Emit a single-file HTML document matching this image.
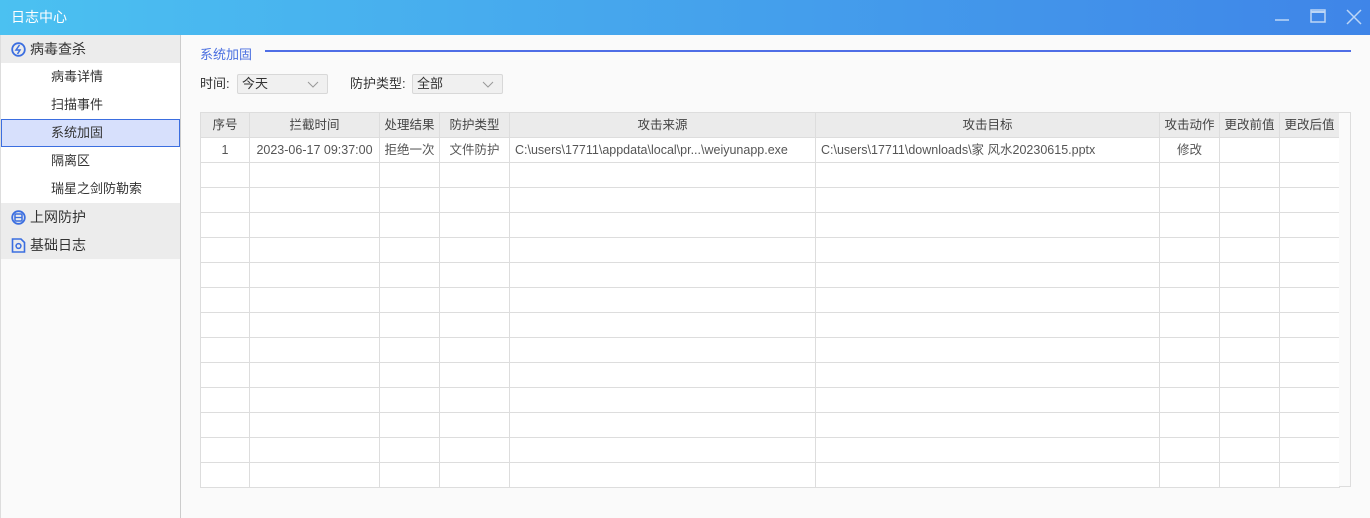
<!DOCTYPE html>
<html><head><meta charset="utf-8"><style>
*{margin:0;padding:0;box-sizing:border-box}
body{width:1370px;height:518px;overflow:hidden;background:#fafafa;font-family:"Liberation Sans","Noto Sans CJK SC",sans-serif;font-size:13px;color:#333;position:relative}
.title{position:absolute;left:0;top:0;width:1370px;height:35px;background:linear-gradient(90deg,#4bc1f1,#3f85e8);color:#fff;font-size:14px;line-height:35px;padding-left:11px}
.side{position:absolute;left:0;top:35px;width:181px;height:483px;background:#fafafa;border-right:1px solid #ccc;border-left:1px solid #ddd}
.grp{height:28px;background:#ececec;line-height:28px;font-size:14px;padding-left:29px;position:relative;color:#333}
.grp svg{position:absolute;left:10px;top:7px}
.it{height:28px;line-height:28px;padding-left:50px;background:#fff}
.sel{background:#d7e0fc;border:1px solid #3b6ee0;line-height:26px;padding-left:49px}
.sec{position:absolute;left:200px;top:44px;color:#4a6fe0;font-size:13px}
.secline{position:absolute;left:265px;top:50px;width:1086px;height:2px;background:#4f6ee6}
.lbl{position:absolute;top:74px;font-size:13px;line-height:20px}
.dd{position:absolute;top:74px;height:20px;border:1px solid #d8d8d8;background:#f0f0f0;border-radius:2px;padding-left:4px;line-height:18px}
.dd svg{position:absolute;right:8px;top:6px}
table{position:absolute;left:200px;top:112px;border-collapse:collapse;table-layout:fixed;font-size:12.5px}
td,th{border:1px solid #ddd;height:25px;line-height:23px;padding:0;vertical-align:middle;text-align:center;font-weight:normal;white-space:nowrap;overflow:hidden;color:#555}
th{background:#ebebeb;color:#444}
td{background:#fff}
.l{text-align:left;padding-left:5px}
.sb{position:absolute;left:1339px;top:112px;width:12px;height:375px;border:1px solid #ddd;border-left:none;background:#fafafa}
</style></head><body>
<div class="title">日志中心
<svg style="position:absolute;left:1275px;top:11px" width="14" height="14"><line x1="0" y1="9" x2="14" y2="9" stroke="#bcd6f6" stroke-width="1.5"/></svg>
<svg style="position:absolute;left:1310px;top:9px" width="16" height="14"><rect x="1" y="1" width="14" height="12" fill="none" stroke="#bcd6f6" stroke-width="1.5"/><line x1="1" y1="3" x2="15" y2="3" stroke="#bcd6f6" stroke-width="2"/></svg>
<svg style="position:absolute;left:1346px;top:9px" width="16" height="16"><path d="M1 1L15 15M15 1L1 15" stroke="#bcd6f6" stroke-width="1.5"/></svg>
</div>
<div class="side">
<div class="grp"><svg width="15" height="15"><circle cx="7.5" cy="7.5" r="6.3" fill="none" stroke="#3b6ee0" stroke-width="1.8"/><path d="M8.5 3L5 8H9L6.5 12" fill="none" stroke="#3b6ee0" stroke-width="1.5"/></svg>病毒查杀</div>
<div class="it">病毒详情</div>
<div class="it">扫描事件</div>
<div class="it sel">系统加固</div>
<div class="it">隔离区</div>
<div class="it">瑞星之剑防勒索</div>
<div class="grp"><svg width="15" height="15"><circle cx="7.5" cy="7.5" r="6.3" fill="none" stroke="#3b6ee0" stroke-width="1.8"/><rect x="4" y="4" width="7" height="7" rx="1" fill="none" stroke="#3b6ee0" stroke-width="1.5"/><line x1="4" y1="7.5" x2="11" y2="7.5" stroke="#3b6ee0" stroke-width="1.3"/></svg>上网防护</div>
<div class="grp"><svg width="15" height="15"><path d="M1.5 1H10L13.5 4.5V14H1.5Z" fill="none" stroke="#3b6ee0" stroke-width="1.6"/><circle cx="7.5" cy="8" r="2.4" fill="none" stroke="#3b6ee0" stroke-width="1.5"/></svg>基础日志</div>
</div>
<div class="sec">系统加固</div><div class="secline"></div>
<div class="lbl" style="left:200px">时间:</div>
<div class="dd" style="left:237px;width:91px">今天<svg width="12" height="7"><path d="M1 1L6 6L11 1" fill="none" stroke="#999"/></svg></div>
<div class="lbl" style="left:350px">防护类型:</div>
<div class="dd" style="left:412px;width:91px">全部<svg width="12" height="7"><path d="M1 1L6 6L11 1" fill="none" stroke="#999"/></svg></div>
<table>
<colgroup><col style="width:49px"><col style="width:130px"><col style="width:60px"><col style="width:70px"><col style="width:306px"><col style="width:344px"><col style="width:60px"><col style="width:60px"><col style="width:60px"></colgroup>
<tr><th>序号</th><th>拦截时间</th><th>处理结果</th><th>防护类型</th><th>攻击来源</th><th>攻击目标</th><th>攻击动作</th><th>更改前值</th><th>更改后值</th></tr>
<tr><td>1</td><td>2023-06-17 09:37:00</td><td>拒绝一次</td><td>文件防护</td><td class="l">C:\users\17711\appdata\local\pr...\weiyunapp.exe</td><td class="l">C:\users\17711\downloads\家 风水20230615.pptx</td><td>修改</td><td></td><td></td></tr>
<tr><td></td><td></td><td></td><td></td><td></td><td></td><td></td><td></td><td></td></tr>
<tr><td></td><td></td><td></td><td></td><td></td><td></td><td></td><td></td><td></td></tr>
<tr><td></td><td></td><td></td><td></td><td></td><td></td><td></td><td></td><td></td></tr>
<tr><td></td><td></td><td></td><td></td><td></td><td></td><td></td><td></td><td></td></tr>
<tr><td></td><td></td><td></td><td></td><td></td><td></td><td></td><td></td><td></td></tr>
<tr><td></td><td></td><td></td><td></td><td></td><td></td><td></td><td></td><td></td></tr>
<tr><td></td><td></td><td></td><td></td><td></td><td></td><td></td><td></td><td></td></tr>
<tr><td></td><td></td><td></td><td></td><td></td><td></td><td></td><td></td><td></td></tr>
<tr><td></td><td></td><td></td><td></td><td></td><td></td><td></td><td></td><td></td></tr>
<tr><td></td><td></td><td></td><td></td><td></td><td></td><td></td><td></td><td></td></tr>
<tr><td></td><td></td><td></td><td></td><td></td><td></td><td></td><td></td><td></td></tr>
<tr><td></td><td></td><td></td><td></td><td></td><td></td><td></td><td></td><td></td></tr>
<tr><td></td><td></td><td></td><td></td><td></td><td></td><td></td><td></td><td></td></tr>
</table>
<div class="sb"></div>
</body></html>
